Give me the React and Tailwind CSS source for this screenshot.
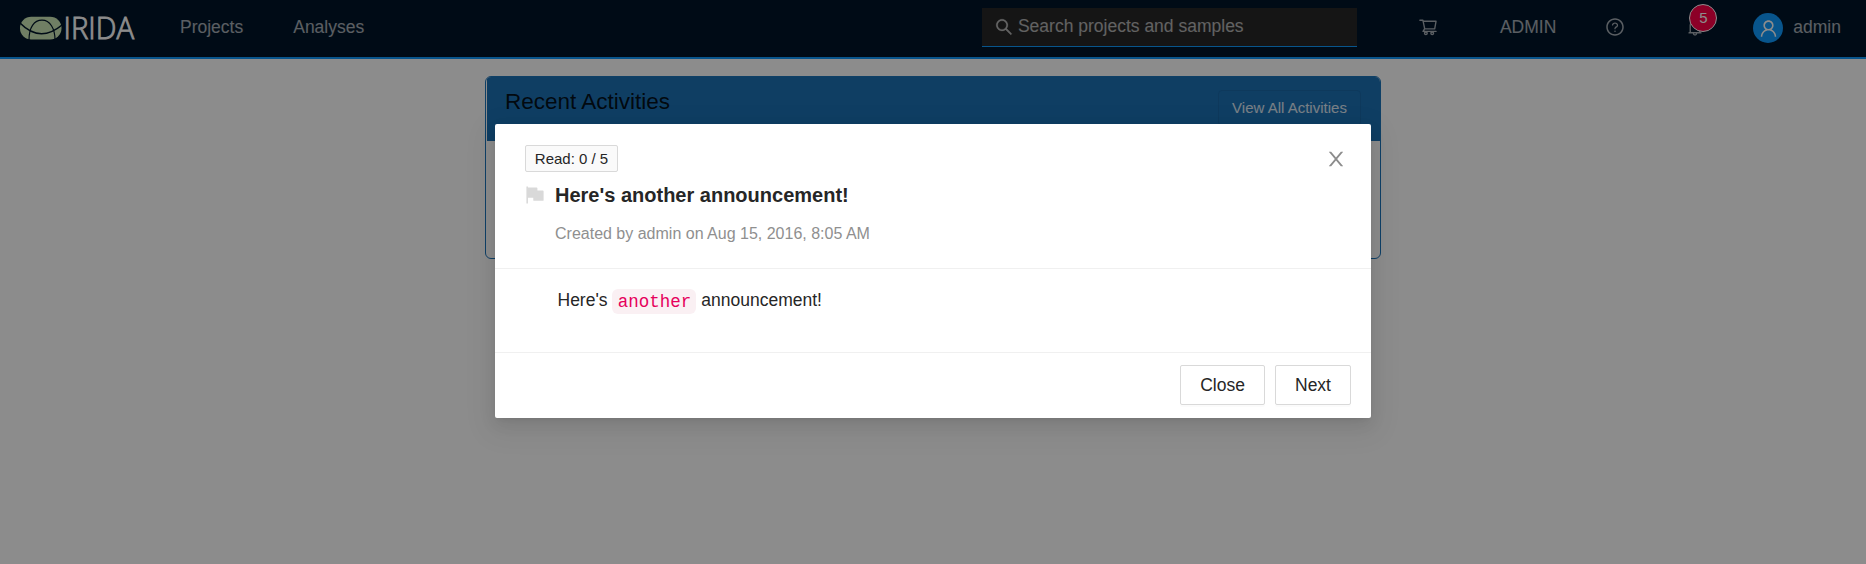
import {
  AiFillFlag,
  AiOutlineBell,
  AiOutlineQuestionCircle,
  AiOutlineSearch,
  AiOutlineShoppingCart,
  AiOutlineUser,
} from "react-icons/ai";

function Logo() {
  return (
    <svg className="ml-5 h-7 w-[116px] shrink-0 overflow-visible" viewBox="0 0 116 28">
      <rect x="0" y="3.800" width="41.500" height="22.700" rx="11.300" fill="#cce8b6" />
      <g fill="none" stroke="#001529">
        <path d="M0 10 Q20 30.500 42 12" strokeWidth="1.6" />
        <path d="M9 27 C9 14.500 14 7.200 22 7.200 C30 7.200 35 15.500 35 27" strokeWidth="1.2" />
      </g>
      <text
        x="43.500"
        y="26.200"
        fill="#fff"
        stroke="#fff"
        strokeWidth="0.900"
        fontSize="31"
        fontWeight="300"
        textLength="70.500"
        lengthAdjust="spacingAndGlyphs"
        className="font-['Open_Sans',sans-serif]"
      >
        IRIDA
      </text>
    </svg>
  );
}

function CloseIcon({ className }) {
  return (
    <svg className={className} viewBox="64 64 896 896" fill="currentColor">
      <path d="M563.8 512l262.5-312.9c4.4-5.2.7-13.1-6.1-13.1h-79.8c-4.7 0-9.2 2.1-12.3 5.7L511.6 449.8 295.1 191.7c-3-3.600-7.500-5.700-12.300-5.700H203c-6.800 0-10.500 7.900-6.100 13.100L459.400 512 196.900 824.900A7.950 7.950 0 0 0 203 838h79.800c4.700 0 9.200-2.100 12.300-5.700l216.500-258.100 216.500 258.100c3 3.600 7.500 5.700 12.300 5.700h79.800c6.800 0 10.500-7.900 6.100-13.100L563.800 512z" />
    </svg>
  );
}

function Header() {
  return (
    <header className="flex h-[59px] items-center border-b-2 border-[#109bff] bg-[#001529] pb-[3px] text-[17.5px] text-white/65">
      <Logo />
      <nav className="flex gap-[50px] pl-11">
        <a>Projects</a>
        <a>Analyses</a>
      </nav>
      <div className="ml-auto flex h-[39px] w-[375px] items-center gap-1 border-b border-[#109bff] bg-[#272727] pl-3">
        <AiOutlineSearch className="size-5 stroke-current" strokeWidth="14" />
        <span className="pb-px">Search projects and samples</span>
      </div>
      <AiOutlineShoppingCart className="ml-[61px] size-5" />
      <span className="ml-[62px]">ADMIN</span>
      <AiOutlineQuestionCircle className="ml-[49px] size-5" />
      <div className="relative ml-[60px]">
        <AiOutlineBell className="size-5" />
        <span className="absolute -top-[13px] left-[4px] flex size-7 items-center justify-center rounded-full border border-white bg-[#ff0048] text-[15px] text-white">
          5
        </span>
      </div>
      <span className="mt-[2px] ml-12 flex size-[30px] items-center justify-center rounded-full bg-[#109bff] text-white">
        <AiOutlineUser className="size-[21px]" />
      </span>
      <span className="mr-[25px] ml-[10px]">admin</span>
    </header>
  );
}

function Activities() {
  return (
    <section className="mx-auto mt-[17px] h-[183px] w-[896px] overflow-hidden rounded-md border border-[#1c75ba] bg-white pl-px">
      <div className="flex h-16 items-start justify-between bg-[#1c71b5] pr-[19px] pl-[18px]">
        <h2 className="mt-[9px] text-[22.5px] leading-8 text-black/85">Recent Activities</h2>
        <button className="mt-[13px] h-9 w-[143px] rounded border border-[#1a68a8] text-[15px] text-white/85">
          View All Activities
        </button>
      </div>
    </section>
  );
}

function Announcement() {
  return (
    <div className="mt-[124px] h-[294px] w-[876px] rounded-[2px] bg-white text-[#262626] shadow-[0_3px_6px_-4px_rgba(0,0,0,0.12),0_6px_16px_0_rgba(0,0,0,0.08),0_9px_28px_8px_rgba(0,0,0,0.05)]">
      <div className="flex h-[145px] justify-between border-b border-[#f0f0f0] pt-[21px] pr-[25px] pl-[30px]">
        <div>
          <span className="flex h-[27px] w-[93px] items-center justify-center rounded-[2px] border border-[#d9d9d9] bg-[#fafafa] pt-px text-[15px]">
            Read: 0 / 5
          </span>
          <div className="mt-[7px] flex items-center gap-[9px]">
            <AiFillFlag className="-ml-px size-[22px] text-[#d9d9d9]" />
            <h1 className="text-[20px] leading-8 font-bold">Here's another announcement!</h1>
          </div>
          <p className="mt-[11px] pl-[30px] text-[16px] leading-6 text-[#8f8f8f]">
            Created by admin on Aug 15, 2016, 8:05 AM
          </p>
        </div>
        <CloseIcon className="mt-1 size-5 text-[#8c8c8c]" />
      </div>
      <div className="h-[84px] border-b border-[#f0f0f0] pt-[18px] pl-[62.5px] text-[17.5px] leading-[27px]">
        Here's{" "}
        <code className="rounded-md bg-[#faf0f3] px-[5.25px] py-[2.5px] align-[-0.5px] font-['Liberation_Mono',monospace] text-[17.5px] leading-5 text-[#e6005c]">
          another
        </code>{" "}
        announcement!
      </div>
      <div className="flex justify-end gap-[10px] pt-3 pr-5 text-[17.5px]">
        <button className="h-10 w-[85px] rounded-[2px] border border-[#d9d9d9] shadow-[0_2px_0_rgba(0,0,0,0.015)]">
          Close
        </button>
        <button className="h-10 w-[76px] rounded-[2px] border border-[#d9d9d9] shadow-[0_2px_0_rgba(0,0,0,0.015)]">
          Next
        </button>
      </div>
    </div>
  );
}

export default function App() {
  return (
    <div className="relative h-[564px] w-full overflow-hidden bg-white font-['Liberation_Sans',Arial,sans-serif]">
      <Header />
      <Activities />
      <div className="absolute inset-0 flex items-start justify-center bg-black/45">
        <Announcement />
      </div>
    </div>
  );
}
